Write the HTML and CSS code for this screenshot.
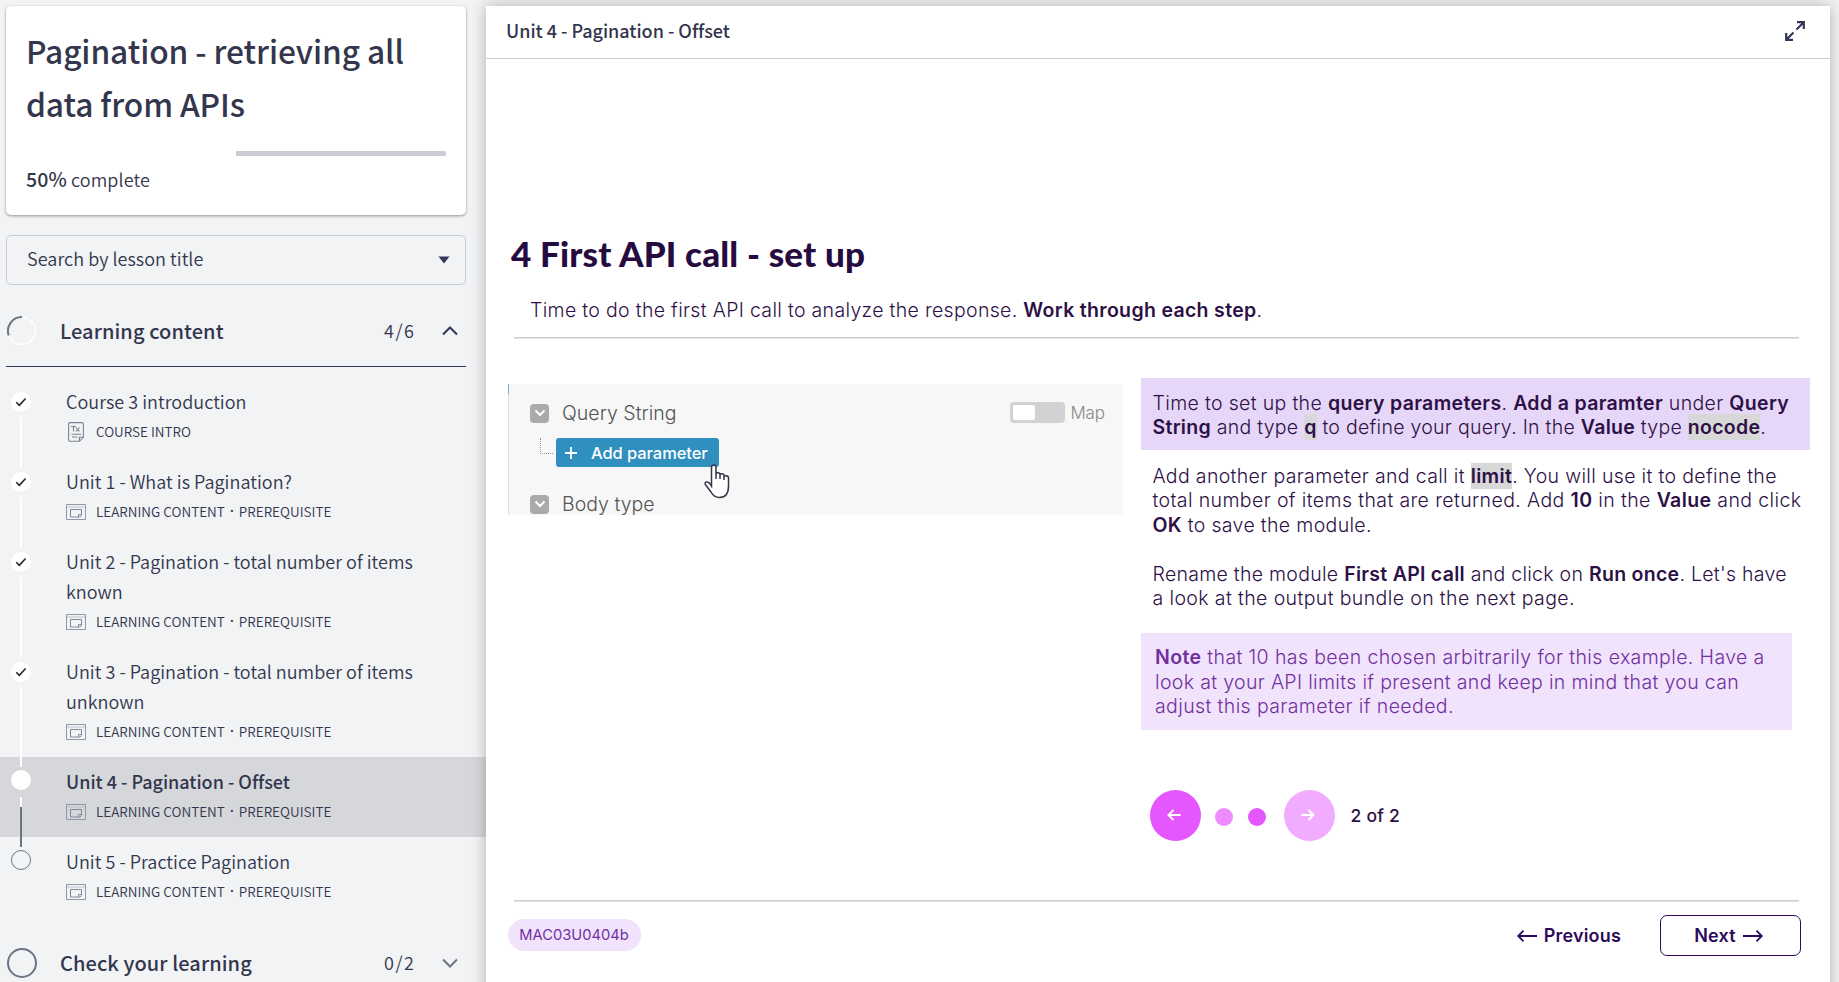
FILE: index.html
```html
<!DOCTYPE html>
<html lang="en">
<head>
<meta charset="utf-8">
<title>Unit 4 - Pagination - Offset</title>
<link rel="stylesheet" href="styles.css">
</head>
<body>
<svg class="defs" width="0" height="0" aria-hidden="true">
  <symbol id="lesson" viewBox="0 0 20 16"><path d="M.5.5h19v15H.5z" fill="none" stroke="#9497a8"/><path d="M1 3h18" stroke="#c0c2cd"/><path d="M4.500 5.500h11v6l-1.500 1.500H4.500zM12.500 13v-2.500h3" fill="none" stroke="#85889b"/></symbol>
  <symbol id="check" viewBox="0 0 12 10"><path d="M1.300 5.300 4.300 8.300 10.600 1.500" fill="none" stroke="#222" stroke-width="1.500"/></symbol>
</svg>
<aside class="sidebar">
  <section class="card">
    <h1><span>Pagination - retrieving all</span><span>data from APIs</span></h1>
    <div class="bar"><i></i></div>
    <p><b>50%</b> complete</p>
  </section>
  <div class="search"><span>Search by lesson title</span><svg width="12" height="8" viewBox="0 0 12 8"><path d="M.5.5h11L6 7.500z" fill="#33365a"/></svg></div>
  <header class="section open">
    <svg class="ring" width="30" height="30" viewBox="0 0 30 30"><circle cx="15" cy="15" r="14.200" fill="none" stroke="#c6c8d0" stroke-width=".8" stroke-dasharray="2 1.500"/><circle cx="15" cy="15" r="13.700" fill="none" stroke="#fff" stroke-width="1.800"/><path d="M15 1A14 14 0 0 0 1.700 19.500" fill="none" stroke="#6f7285" stroke-width="2"/></svg>
    <h2>Learning content</h2>
    <span class="count">4/6</span>
    <svg class="chev" width="16" height="10" viewBox="0 0 16 10"><path d="M1 8.500 8 1.500l7 7" fill="none" stroke="#33365a" stroke-width="2"/></svg>
  </header>
  <ul class="lessons">
    <li><span class="dot done"><svg width="12" height="10"><use href="#check"/></svg></span><i class="rail"></i><div class="name">Course 3 introduction</div><div class="meta"><svg class="tx" width="16" height="20" viewBox="0 0 16 20"><path d="M2 .6h12q1.400 0 1.400 1.400v13.300l-4 4H2q-1.400 0-1.400-1.400V2Q.6.6 2 .6zM11.400 19v-3.700h4M3.500 12.300h9.500M4 15h5.500M3 4.500h5M5.500 4.500v5M8 5.500l3.500 4M11.500 5.500l-3.500 4" fill="none" stroke="#7e8293" stroke-width="1.100"/></svg><span>COURSE INTRO</span></div></li>
    <li><span class="dot done"><svg width="12" height="10"><use href="#check"/></svg></span><i class="rail"></i><div class="name">Unit 1 - What is Pagination?</div><div class="meta"><svg width="20" height="16"><use href="#lesson"/></svg><span>LEARNING CONTENT</span><span class="sep">·</span><span>PREREQUISITE</span></div></li>
    <li class="tall"><span class="dot done"><svg width="12" height="10"><use href="#check"/></svg></span><i class="rail"></i><div class="name long">Unit 2 - Pagination - total number of items<br>known</div><div class="meta"><svg width="20" height="16"><use href="#lesson"/></svg><span>LEARNING CONTENT</span><span class="sep">·</span><span>PREREQUISITE</span></div></li>
    <li class="tall"><span class="dot done"><svg width="12" height="10"><use href="#check"/></svg></span><i class="rail"></i><div class="name long">Unit 3 - Pagination - total number of items<br>unknown</div><div class="meta"><svg width="20" height="16"><use href="#lesson"/></svg><span>LEARNING CONTENT</span><span class="sep">·</span><span>PREREQUISITE</span></div></li>
    <li class="current"><span class="dot now"></span><i class="rail next"></i><div class="name">Unit 4 - Pagination - Offset</div><div class="meta"><svg width="20" height="16"><use href="#lesson"/></svg><span>LEARNING CONTENT</span><span class="sep">·</span><span>PREREQUISITE</span></div></li>
    <li><span class="dot todo"></span><div class="name">Unit 5 - Practice Pagination</div><div class="meta"><svg width="20" height="16"><use href="#lesson"/></svg><span>LEARNING CONTENT</span><span class="sep">·</span><span>PREREQUISITE</span></div></li>
  </ul>
  <header class="section">
    <svg class="ring" width="30" height="30" viewBox="0 0 30 30"><circle cx="15" cy="15" r="14" fill="none" stroke="#6f7285" stroke-width="2"/></svg>
    <h2>Check your learning</h2>
    <span class="count">0/2</span>
    <svg class="chev" width="16" height="10" viewBox="0 0 16 10"><path d="M1 1.500l7 7 7-7" fill="none" stroke="#6f7285" stroke-width="2"/></svg>
  </header>
</aside>
<main class="panel">
  <header class="top"><span>Unit 4 - Pagination - Offset</span>
    <svg width="20" height="20" viewBox="0 0 20 20"><path d="M11.500 8.500 18.500 1.500M12 1.200h6.800V8M8.500 11.500 1.500 18.500M1.200 12v6.800H8" fill="none" stroke="#33365a" stroke-width="2.200"/></svg></header>
  <article class="slide">
    <h3>4 First API call - set up</h3>
    <p class="lead">Time to do the first API call to analyze the response. <b>Work through each step</b>.</p>
    <hr>
    <div class="cols">
      <figure class="shot">
        <div class="row"><span class="box"><svg width="12" height="8" viewBox="0 0 12 8"><path d="M1.500 1.500 6 6l4.500-4.500" fill="none" stroke="#fff" stroke-width="2"/></svg></span><span class="label">Query String</span><span class="toggle"><i></i></span><span class="map">Map</span></div>
        <div class="row add"><i class="elbow"></i><span class="btn"><svg width="12" height="12" viewBox="0 0 12 12"><path d="M6 0v12M0 6h12" stroke="#fff" stroke-width="1.800"/></svg><span>Add parameter</span></span>
          <svg class="hand" width="26" height="35" viewBox="0 0 26 35"><path d="M7.500 22V3.500Q7.500 1 9.700 1 12 1 12 3.500V15v-4.500Q12 8.700 14 8.700t2 2V15v-3.500q0-1.700 2-1.700t2 2V16v-2.500q0-1.700 2-1.700 2.500 0 2.500 2.500V22Q24.500 33.500 15.500 33.500 10 33.500 7 28L1.300 20.500Q.5 18 3 18q2 0 4.500 4z" fill="#fff" stroke="#34344a" stroke-width="1.500"/></svg></div>
        <div class="row body"><span class="box"><svg width="12" height="8" viewBox="0 0 12 8"><path d="M1.500 1.500 6 6l4.500-4.500" fill="none" stroke="#fff" stroke-width="2"/></svg></span><span class="label">Body type</span></div>
      </figure>
      <div class="text">
        <div class="hl"><span>Time to set up the <b>query parameters</b>. <b>Add a paramter</b> under <b>Query</b></span><span class="tight"><b>String</b> and type <mark>q</mark> to define your query. In the <b>Value</b> type <mark>nocode</mark>.</span></div>
        <div class="para"><span>Add another parameter and call it <mark>limit</mark>. You will use it to define the</span><span class="wide">total number of items that are returned. Add <b>10</b> in the <b>Value</b> and click</span><span><b>OK</b> to save the module.</span></div>
        <div class="para"><span class="tight">Rename the module <b>First API call</b> and click on <b>Run once</b>. Let's have</span><span class="wide">a look at the output bundle on the next page.</span></div>
        <div class="note"><span class="wide"><b>Note</b> that 10 has been chosen arbitrarily for this example. Have a</span><span>look at your API limits if present and keep in mind that you can</span><span class="wide">adjust this parameter if needed.</span></div>
        <div class="pager"><span class="big"><svg width="14" height="12" viewBox="0 0 14 12"><path d="M13.500 6H1.500M6.500 1l-5 5 5 5" fill="none" stroke="#fff" stroke-width="2"/></svg></span><i class="small"></i><i class="small on"></i><span class="big off"><svg width="14" height="12" viewBox="0 0 14 12"><path d="M.5 6h12M7.500 1l5 5-5 5" fill="none" stroke="#fff" stroke-width="2"/></svg></span><span class="of">2 of 2</span></div>
      </div>
    </div>
    <hr class="end">
    <footer><span class="tag">MAC03U0404b</span><a class="prev"><svg width="20" height="12" viewBox="0 0 20 12"><path d="M20 6H1M6.500.7 1.200 6l5.300 5.300" fill="none" stroke="#2d0a5b" stroke-width="1.800"/></svg><span>Previous</span></a><a class="nextbtn"><span>Next</span><svg width="20" height="12" viewBox="0 0 20 12"><path d="M0 6h19M13.500.7 18.800 6l-5.300 5.300" fill="none" stroke="#2d0a5b" stroke-width="1.800"/></svg></a></footer>
  </article>
</main>
</body>
</html>
```
FILE: styles.css
```css
* { box-sizing: border-box; margin: 0; padding: 0; }
body { display: flex; width: 1839px; height: 982px; overflow: hidden; background: #f1f3f5; color: #33364d; font: 18px/30px "Noto Sans CJK SC", "Noto Sans", sans-serif; font-weight: 350; }
.defs { position: absolute; }
svg { display: block; flex: none; }
span { white-space: nowrap; }
.sidebar { width: 486px; flex: none; }
.card { margin: 6px 20px 0 6px; height: 209px; padding: 18px 20px 0; background: #fff; border-radius: 5px; box-shadow: 0 1px 3px rgba(0,0,0,.4); }
.card h1 { font-size: 31.700px; letter-spacing: -.09px; line-height: 53px; font-weight: 500; display: flex; flex-direction: column; align-items: flex-start; }
.bar { margin-top: 21px; height: 5px; display: flex; justify-content: flex-end; }
.bar i { width: 210px; background: #c9cbd6; border-radius: 0 3px 3px 0; }
.card p { margin-top: 8px; letter-spacing: .1px; }
.card p b { font-weight: 500; font-size: 19.500px; }
.search { margin: 20px 20px 0 6px; height: 50px; padding: 0 15px 0 20px; border: 1px solid #c9cbd8; border-radius: 5px; display: flex; align-items: center; justify-content: space-between; }
.search span { margin-top: -4px; letter-spacing: .04px; }
.section { display: flex; align-items: center; height: 82px; margin: 0 20px 0 6px; padding: 10px 8px 0 1px; border-bottom: 1px solid transparent; }
.section.open { border-color: #33365a; }
.section h2 { margin-left: 23px; font-size: 20px; font-weight: 500; letter-spacing: .09px; flex: 1; }
.count { letter-spacing: 1.500px; width: 33px; margin-top: -1px; }
.chev { margin-left: 25px; }
.lessons { list-style: none; margin-top: 10px; }
.lessons li { position: relative; height: 80px; padding: 9px 0 0 66px; }
.lessons li.tall { height: 110px; }
.lessons li.current { background: #d6d7db; }
.name { letter-spacing: .03px; }
.current .name { font-weight: 500; letter-spacing: -.02px; }
.meta { display: flex; align-items: center; font-size: 13.500px; letter-spacing: .01px; }
.meta svg { width: 20px; margin: 2px 10px 0 0; }
.meta .tx { width: 16px; margin: 2px 12px 0 2px; }
.sep { font-family: "Noto Sans", sans-serif; font-weight: 600; width: 14px; text-align: center; }
.dot { position: absolute; left: 11px; top: 15px; width: 20px; height: 20px; border-radius: 50%; background: #fff; display: flex; align-items: center; justify-content: center; }
.dot.now, .dot.todo { top: 13px; }
.dot.todo { background: none; border: 1px solid #6f7285; }
.rail { position: absolute; z-index: 1; left: 20px; top: 40px; bottom: -10px; width: 2px; background: #fff; }
.rail.next { background: linear-gradient(#fff 10px, #6f7285 10px); }
.panel { position: relative; z-index: 2; width: 1344px; height: 990px; margin-top: 6px; background: #fff; box-shadow: 0 0 14px rgba(0,0,0,.28); }
.top { height: 53px; padding: 0 25px 5px 20px; border-bottom: 1px solid #c9cbdb; display: flex; align-items: center; justify-content: space-between; font-weight: 500; letter-spacing: -.02px; }
.top svg { margin-top: 2px; }
.slide { padding: 0 31px 0 21px; color: #2d1046; font: 300 19.500px/24.400px Inter, "Open Sans", sans-serif; }
.slide b, .slide mark { font-weight: 600; }
h3 { margin-top: 169px; padding-left: 4px; font: 900 35px/50px Lato, sans-serif; letter-spacing: .18px; color: #260b40; white-space: nowrap; }
.lead { margin: 20px 0 0 23px; letter-spacing: .32px; white-space: nowrap; }
hr { border: 0; height: 2px; margin: 15px 0 0 7px; background: linear-gradient(#d4cccb 1px, #e6e1e1 1px); }
.cols { display: flex; }
.shot { width: 615px; height: 131px; margin: 45px 0 0 1px; background: linear-gradient(#6fb0e0 10px, #dcdfe2 10px) 0 0 / 1px 100% no-repeat #f7f7f7; padding-left: 1px; overflow: hidden; flex: none; color: #555; }
.row { display: flex; align-items: center; height: 24px; margin-top: 17px; padding-left: 21px; }
.box { width: 19px; height: 19px; border-radius: 4px; background: #aaa; display: flex; align-items: center; justify-content: center; margin-right: 13px; }
.label { letter-spacing: .02px; }
.toggle { margin: -2px 0 0 auto; width: 55px; height: 21px; border-radius: 4px; background: #d2d2d2; padding: 3px; display: flex; }
.toggle i { width: 22px; background: #fff; border-radius: 2px; }
.map { margin: -1px 18px 0 5px; color: #888; font-size: 17px; letter-spacing: -.1px; }
.add { position: relative; height: 29px; margin-top: 13px; padding-left: 31px; }
.elbow { width: 13px; height: 16px; margin: 0 3px 13px 0; border: 1px dotted #999; border-width: 0 0 1px 1px; }
.btn { width: 163px; height: 29px; border-radius: 3px; background: #2f8fbf; color: #fff; display: flex; align-items: center; padding-left: 9px; gap: 14px; font-size: 16.500px; font-weight: 500; letter-spacing: -.08px; }
.hand { position: absolute; left: 195px; top: 26px; }
.body { margin-top: 25px; }
.text { margin-left: 18px; display: flex; flex-direction: column; }
.text > div:not(.pager) { display: flex; flex-direction: column; align-items: flex-start; letter-spacing: .34px; }
.text .tight { letter-spacing: .28px; }
.text .wide { letter-spacing: .385px; }
.text .hl { letter-spacing: .31px; }
mark { background: #d8d8d8; color: inherit; padding: 1px 0; }
.hl { width: 669px; height: 72px; margin-top: 39px; padding: 12.500px 0 0 11.500px; background: #e6d6f7; }
.para { padding: 13.500px 0 0 11.500px; }
.para + .para { padding-top: 24.400px; }
.note { width: 651px; height: 97px; margin-top: 23px; padding: 12px 0 0 14px; background: #f0e3fb; color: #7030a0; }
.pager { display: flex; align-items: center; margin: 59.500px 0 0 8.500px; height: 52px; }
.big { width: 51px; height: 51px; padding: 0 3px 2px 0; border-radius: 50%; background: #e656ff; display: flex; align-items: center; justify-content: center; }
.small { width: 18px; height: 18px; border-radius: 50%; margin: 2px 0 0 14px; background: #ee8bff; }
.small.on { margin-left: 15px; background: #e656ff; }
.big.off { margin-left: 18px; background: #f1abff; }
.of { margin-left: 16px; font-size: 17.500px; letter-spacing: .25px; font-weight: 500; }
hr.end { margin-top: 58.500px; }
footer { display: flex; align-items: center; height: 41px; margin-top: 13px; }
.tag { height: 32px; width: 133px; border-radius: 16px; margin: -1px 0 0 1px; padding-right: 1px; background: #f0e3fb; color: #7030a0; display: flex; align-items: center; justify-content: center; font-size: 14.700px; font-weight: 400; }
.prev, .nextbtn { display: flex; align-items: center; gap: 7px; color: #2d0a5b; font-size: 18px; font-weight: 600; letter-spacing: .17px; }
.prev { margin-left: auto; }
.nextbtn { margin: 0 -2px 0 39px; width: 141px; height: 41px; border: 1.500px solid #2d0a5b; border-radius: 7px; justify-content: center; padding-right: 4px; }
```
